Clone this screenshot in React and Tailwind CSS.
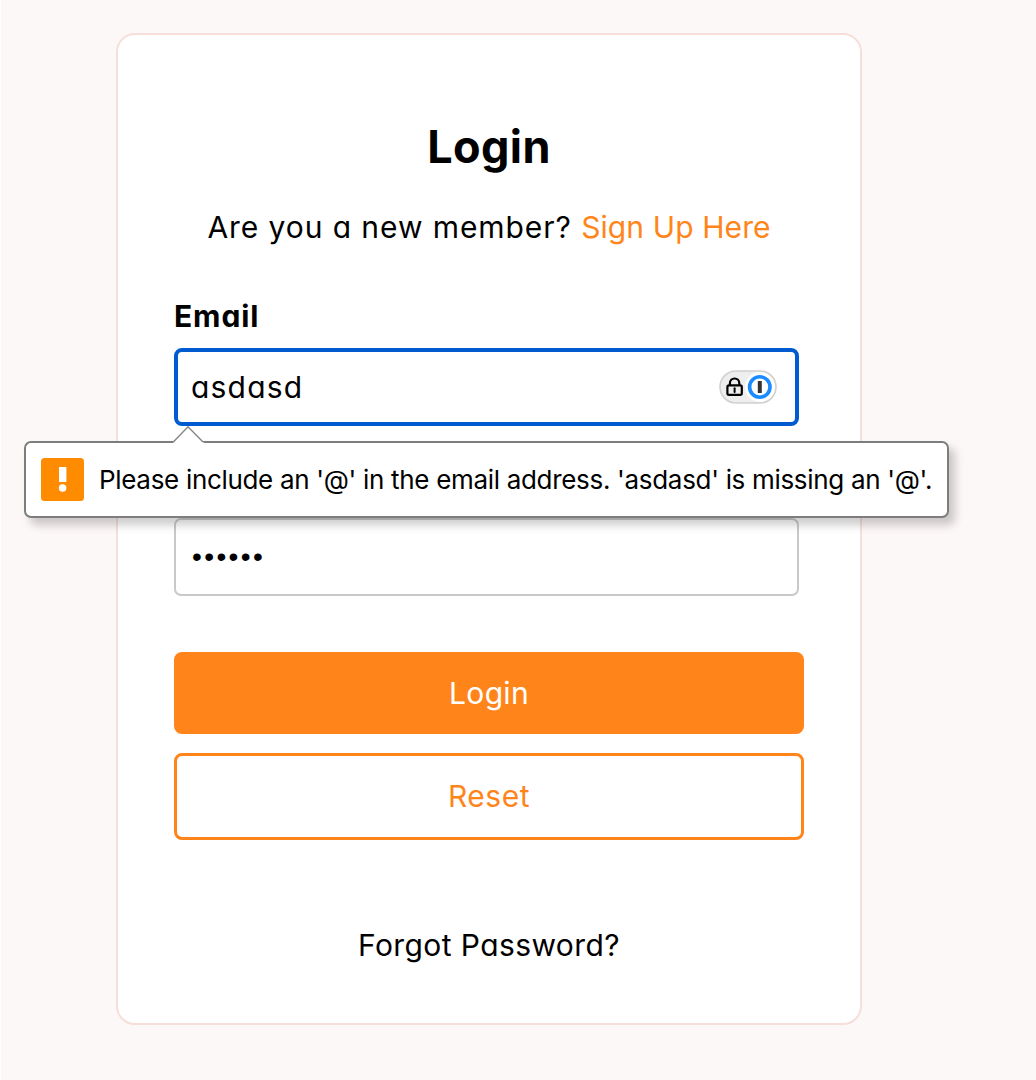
function LockBadge() {
  return (
    <svg className="h-[34px] w-[58px]" viewBox="0 0 58 34" fill="none">
      <rect x="1" y="1" width="56" height="32" rx="16" fill="#eeeeee" stroke="#d0d0d0" strokeWidth="1.6" />
      <circle cx="41" cy="17" r="15" fill="#ffffff" />
      <rect x="8.4" y="15.4" width="14.4" height="9.4" rx="1.6" stroke="#000000" strokeWidth="2.2" />
      <path d="M10.9 15V13.2a4.7 4.7 0 0 1 9.4 0V15" stroke="#000000" strokeWidth="2.2" />
      <path d="M15.6 18.2v3.8" stroke="#000000" strokeWidth="2" strokeLinecap="round" />
      <circle cx="40.8" cy="17" r="10.2" stroke="#1a8cff" strokeWidth="3.6" />
      <rect x="38.8" y="11" width="4" height="12" rx="0.5" fill="#333333" />
    </svg>
  );
}

function ValidationBubble() {
  return (
    <div className="absolute top-[73px] left-[-154px] h-[92px] w-[925px] [font-feature-settings:normal]">
      <div className="mt-[16px] flex h-[77px] items-center rounded-[7px] border-2 border-[#7d7d7d] bg-white pl-[15px] shadow-[6px_7px_8px_rgba(60,50,50,0.25)]">
        <svg className="h-[43px] w-[43px] shrink-0" viewBox="0 0 43 43">
          <rect width="43" height="43" rx="3.5" fill="#ff8c00" />
          <rect x="18" y="9" width="7.4" height="15" fill="#ffffff" />
          <circle cx="21.6" cy="30" r="3.8" fill="#ffffff" />
        </svg>
        <span className="ml-[15px] font-[Inter,sans-serif] text-[26px] tracking-[-0.315px] whitespace-nowrap">
          Please include an '@' in the email address. 'asdasd' is missing an '@'.
        </span>
      </div>
      <svg className="absolute top-[1px] left-[148px] h-[17px] w-[34px]" viewBox="0 0 34 17">
        <path d="M1 17L16 1L32 17Z" fill="#ffffff" />
        <path d="M1.3 16L16 .8L31 16" fill="none" stroke="#858585" strokeWidth="1.4" />
      </svg>
    </div>
  );
}

export default function App() {
  return (
    <div className="h-[1080px] w-[1036px] overflow-hidden border-l border-white bg-[#fcf8f7] pt-[33px] pl-[115px] font-[Inter,sans-serif] text-black [font-feature-settings:'cv11']">
      <div className="flex h-[992px] w-[746px] flex-col rounded-[19px] border-2 border-[#f6ded9] bg-white px-[56px]">
        <h1 className="mt-[82px] text-center text-[45px] leading-[60px] font-bold tracking-[0.4px]">Login</h1>
        <p className="mt-[30px] text-center text-[30px] leading-[40px] tracking-[0.93px] whitespace-nowrap">
          Are you a new member? <a className="tracking-[0.1px] text-[#ff851b]">Sign Up Here</a>
        </p>
        <label className="mt-[49px] text-[30px] leading-[40px] font-bold tracking-[0.9px]">Email</label>
        <div className="relative mt-[12px] flex h-[78px] w-[625px] items-center justify-between rounded-[8px] border-4 border-[#005bd1] pr-[18px] pl-[13px]">
          <span className="text-[30px] tracking-[1.2px]">asdasd</span>
          <LockBadge />
          <ValidationBubble />
        </div>
        <div className="mt-[92px] flex h-[78px] w-[625px] items-center rounded-[7px] border-2 border-[#c9c9c9] pl-[16px]">
          <span className="font-['Liberation_Sans',sans-serif] text-[28px] tracking-[2.4px]">••••••</span>
        </div>
        <button className="mt-[56px] h-[82px] w-[630px] rounded-[8px] bg-[#ff851b] text-[30px] tracking-[0.3px] text-white">Login</button>
        <button className="mt-[19px] h-[87px] w-[630px] rounded-[8px] border-[3px] border-[#ff851b] text-[30px] tracking-[0.5px] text-[#ff851b]">Reset</button>
        <a className="mt-[85px] text-center text-[30px] leading-[40px] tracking-[0.4px]">Forgot Password?</a>
      </div>
    </div>
  );
}
